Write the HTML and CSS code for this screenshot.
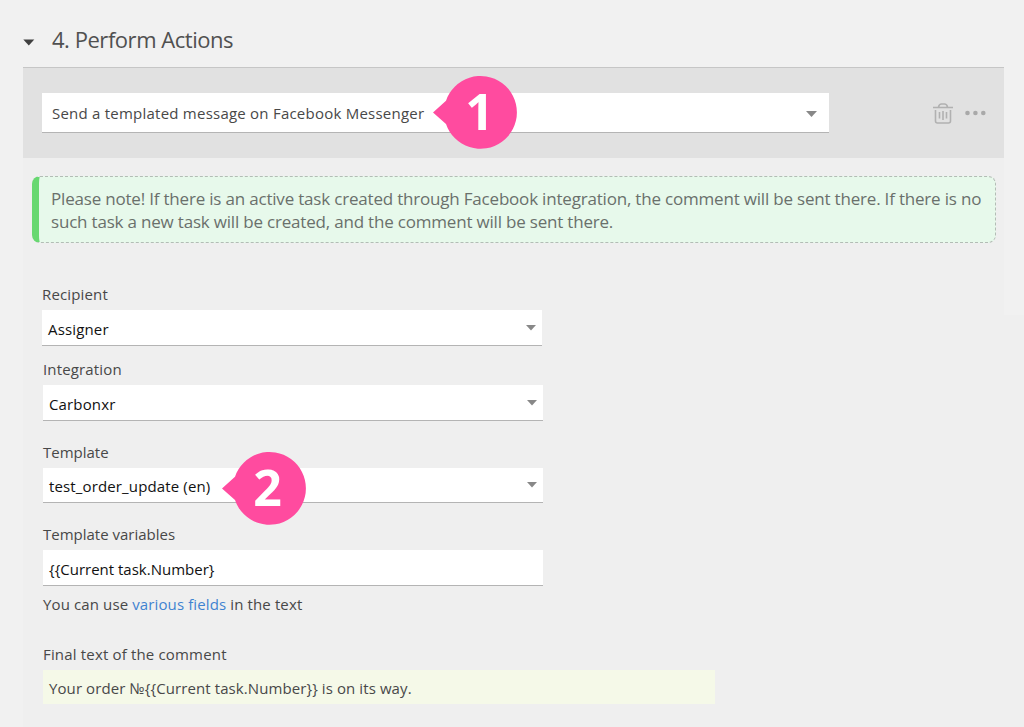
FILE: index.html
```html
<!DOCTYPE html>
<html lang="en">
<head>
    <meta charset="UTF-8">
    <meta name="viewport" content="width=device-width, initial-scale=1.0">
    <title>Perform Actions</title>
    <link rel="stylesheet" href="styles.css">
</head>
<body>
    <header class="section-header">
        <svg class="toggle" width="12" height="7" viewBox="0 0 12 7"><path d="M0.3 0.4h11L5.8 6.4z"/></svg>
        <h1>4. Perform Actions</h1>
    </header>

    <main class="panel">
        <div class="action-bar">
            <div class="action-select">
                <span class="action-name">Send a templated message on Facebook Messenger</span>
                <svg class="arrow" width="11" height="6" viewBox="0 0 11 6"><path d="M0 0h11L5.5 6z"/></svg>
                <div class="marker marker-action">
                    <svg width="84" height="74" viewBox="0 0 84 74"><path d="M0 37.5L13 25.8A36.4 36.4 0 1 1 13 49z"/></svg>
                    <span>1</span>
                </div>
            </div>
            <div class="action-tools">
                <svg class="trash" width="20" height="21" viewBox="0 0 20 21">
                    <path d="M0 4.5h20M5.5 4C6 1.6 7 1 8.5 1h3c1.5 0 2.5.6 3 3"/>
                    <path d="M2.5 7v11c0 1.4.7 2 2 2h11c1.3 0 2-.6 2-2V7M6.5 9v6.5M10 8v9M13.5 9v6.5"/>
                </svg>
                <svg class="more" width="21" height="6" viewBox="0 0 21 6"><circle cx="2.5" cy="3" r="2.3"/><circle cx="10.4" cy="3" r="2.3"/><circle cx="18.3" cy="3" r="2.3"/></svg>
            </div>
        </div>

        <div class="note">
            <p>Please note! If there is an active task created through Facebook integration, the comment will be sent there. If there is no</p>
            <p>such task a new task will be created, and the comment will be sent there.</p>
        </div>

        <form class="fields">
            <div class="field recipient">
                <label>Recipient</label>
                <div class="control">
                    <span>Assigner</span>
                    <svg class="arrow" width="10" height="6" viewBox="0 0 10 6"><path d="M0 0h10L5 5.5z"/></svg>
                </div>
            </div>
            <div class="field integration">
                <label>Integration</label>
                <div class="control">
                    <span>Carbonxr</span>
                    <svg class="arrow" width="10" height="6" viewBox="0 0 10 6"><path d="M0 0h10L5 5.5z"/></svg>
                </div>
            </div>
            <div class="field template">
                <label>Template</label>
                <div class="control">
                    <span>test_order_update (en)</span>
                    <svg class="arrow" width="10" height="6" viewBox="0 0 10 6"><path d="M0 0h10L5 5.5z"/></svg>
                    <div class="marker marker-template">
                        <svg width="84" height="74" viewBox="0 0 84 74"><path d="M0 37.5L13 25.8A36.4 36.4 0 1 1 13 49z"/></svg>
                        <span>2</span>
                    </div>
                </div>
            </div>
            <div class="field variables">
                <label>Template variables</label>
                <div class="control"><span>{{Current task.Number}</span></div>
                <p class="hint">You can use <a href="#">various fields</a> in the text</p>
            </div>
            <div class="field final">
                <label>Final text of the comment</label>
                <div class="preview">Your order №{{Current task.Number}} is on its way.</div>
            </div>
        </form>
    </main>
</body>
</html>
```
FILE: styles.css
```css
* {
    margin: 0;
    padding: 0;
    box-sizing: border-box;
}

body {
    height: 727px;
    overflow: hidden;
    padding-left: 23px;
    background: #f1f1f1;
    color: #484848;
    font-family: 'Open Sans', 'Noto Sans', sans-serif;
    font-size: 15px;
    line-height: 20px;
}

svg {
    display: block;
    flex: none;
}

/* Section header */
.section-header {
    display: flex;
    align-items: center;
    gap: 17px;
    height: 67px;
    padding-top: 10px;
}

.toggle {
    margin-top: 8px;
    fill: #404040;
}

h1 {
    font-size: 22px;
    font-weight: 400;
    line-height: 30px;
    letter-spacing: -0.46px;
    color: #505050;
    white-space: nowrap;
}

.panel {
    height: 660px;
    background: linear-gradient(#f1f1f1, #f1f1f1) no-repeat right top / 20px 248px #efefef;
}

/* Action row */
.action-bar {
    display: flex;
    justify-content: space-between;
    width: 981px;
    height: 91px;
    padding: 25px 18px 0 19px;
    background: #e1e1e1;
    border-top: 1px solid #c6c6c6;
}

.action-select {
    position: relative;
    display: flex;
    align-items: center;
    justify-content: space-between;
    width: 787px;
    height: 40px;
    padding: 1px 12px 0 10px;
    background: #fff;
    border-bottom: 1px solid #b4b4b4;
    white-space: nowrap;
}

.action-name {
    letter-spacing: 0.23px;
}

.arrow {
    fill: #888;
}

.action-select .arrow {
    margin-top: 1px;
}

.action-tools {
    display: flex;
    align-items: center;
    gap: 12px;
    height: 40px;
}

.trash {
    fill: none;
    stroke: #b1b1b1;
    stroke-width: 1.6;
}

.more {
    fill: #a9a9a9;
}

/* Numbered markers over the selects */
.marker {
    position: absolute;
    width: 84px;
    height: 74px;
    letter-spacing: 0;
}

.marker svg {
    fill: #ff4b9f;
}

.marker span {
    position: absolute;
    top: 0;
    left: 9px;
    width: 73px;
    color: #fff;
    font-size: 50px;
    font-weight: 700;
    line-height: 73px;
    text-align: center;
}

.marker-action {
    top: -18px;
    left: 391px;
}

.marker-action span {
    left: 10px;
}

.marker-template {
    top: -17px;
    left: 179px;
}

/* Note */
.note {
    width: 964px;
    height: 67px;
    margin: 18px 0 0 9px;
    padding: 10px 0 0 12px;
    background: #e7f9eb;
    border: 1px dashed #b3bcb5;
    border-left: 7px solid #68d871;
    border-radius: 8px;
    color: #6a706b;
    font-size: 17px;
    line-height: 23px;
    letter-spacing: -0.195px;
    white-space: nowrap;
}

/* Form */
.fields {
    padding: 41px 0 0 20px;
    white-space: nowrap;
}

.field {
    width: 500px;
}

.field label {
    display: block;
    height: 26px;
}

.control {
    position: relative;
    display: flex;
    align-items: center;
    justify-content: space-between;
    height: 36px;
    padding: 3px 6px 0;
    background: #fff;
    border-bottom: 1px solid #b4b4b4;
    color: #111;
}

.control .arrow {
    margin-top: -3px;
}

.recipient {
    margin: 0 0 13px -1px;
    letter-spacing: 0.15px;
}

.integration {
    margin-bottom: 21px;
    letter-spacing: 0.15px;
}

.template {
    margin-bottom: 21px;
}

.template .control {
    height: 35px;
    padding-top: 1px;
    letter-spacing: 0.14px;
}

.template .arrow {
    margin-top: -1px;
}

.hint {
    margin: 8px 0 30px;
    letter-spacing: 0.12px;
}

.hint a {
    color: #3f83d1;
    text-decoration: none;
}

.final label {
    letter-spacing: 0.17px;
}

.preview {
    width: 672px;
    height: 34px;
    padding: 8px 6px;
    background: #f5f9e8;
    letter-spacing: 0.09px;
}
```
